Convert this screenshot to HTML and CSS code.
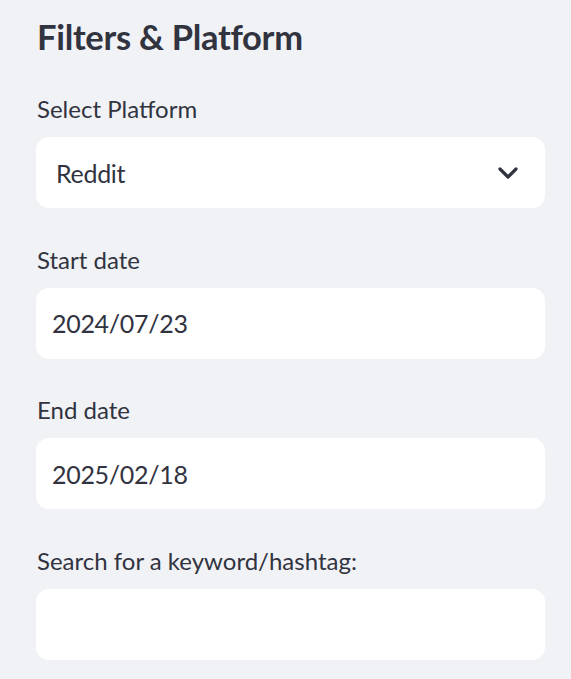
FILE: index.html
```html
<!DOCTYPE html>
<html>
<head>
<meta charset="utf-8">
<link rel="stylesheet" href="styles.css">
</head>
<body>
<aside class="sidebar">
  <h2 class="title">Filters &amp; Platform</h2>
  <div class="field">
    <label class="label">Select Platform</label>
    <div class="box select">
      <span class="value">Reddit</span>
      <svg class="chev" width="20" height="12" viewBox="0 0 20 12"><path d="M2 2 L10 10 L18 2" fill="none" stroke="#31333f" stroke-width="3.2" stroke-linecap="round" stroke-linejoin="round"/></svg>
    </div>
  </div>
  <div class="field">
    <label class="label">Start date</label>
    <div class="box date"><span class="value">2024/07/23</span></div>
  </div>
  <div class="field">
    <label class="label">End date</label>
    <div class="box date"><span class="value">2025/02/18</span></div>
  </div>
  <div class="field">
    <label class="label">Search for a keyword/hashtag:</label>
    <div class="box date"><span class="value"></span></div>
  </div>
</aside>
</body>
</html>
```
FILE: styles.css
```css
html, body {
  margin: 0;
  padding: 0;
  background: #f0f2f6;
}
body {
  font-family: "Lato", "Open Sans", sans-serif;
  color: #31333f;
}
.sidebar {
  padding: 15px 26px 0 36px;
  display: flex;
  flex-direction: column;
}
.title {
  margin: 0 0 0 1px;
  font-size: 34.5px;
  font-weight: 700;
  line-height: 44px;
  letter-spacing: -0.3px;
}
.field {
  display: flex;
  flex-direction: column;
  margin-top: 32px;
}
.field + .field {
  margin-top: 33.5px;
}
.label {
  font-size: 24px;
  line-height: 36px;
  margin: 0 0 10px 1px;
}
.box {
  background: #ffffff;
  border-radius: 13px;
  height: 71px;
  display: flex;
  align-items: center;
  box-sizing: border-box;
}
.select {
  padding: 0 27px 0 20px;
  justify-content: space-between;
}
.date {
  padding: 0 16px;
}
.value {
  font-size: 25px;
  letter-spacing: -0.3px;
}
.chev {
  display: block;
}
```
